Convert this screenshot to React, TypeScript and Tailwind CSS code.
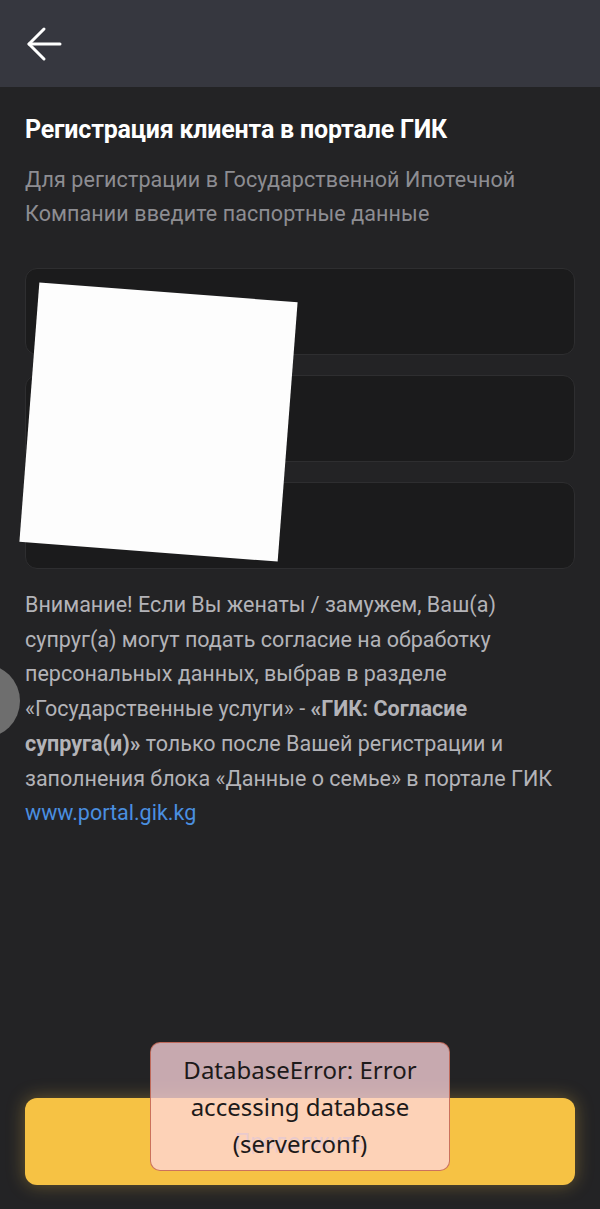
import React from "react";

export default function App() {
  const font = { fontFamily: "Roboto, 'Noto Sans', sans-serif" };
  return (
    <div className="relative w-[600px] h-[1209px] overflow-hidden bg-[#232325]" style={font}>
      <header className="h-[87px] bg-[#36373f] flex items-center pl-[25px]">
        <svg width="38" height="38" viewBox="0 0 38 38" fill="none" stroke="#ffffff" strokeWidth="3" strokeLinecap="round" strokeLinejoin="round">
          <path d="M35 19H4" />
          <path d="M19 4L4 19L19 34" />
        </svg>
      </header>

      <main className="px-[25px] pt-[27px]">
        <h1 className="text-[25px] leading-[32px] font-bold text-white tracking-[-0.2px]">Регистрация клиента в портале ГИК</h1>
        <p className="mt-[17px] text-[21.5px] leading-[34px] text-[#8d8d92] tracking-[0.1px]">
          Для регистрации в Государственной Ипотечной<br />Компании введите паспортные данные
        </p>

        <div className="mt-[37px] flex flex-col gap-[20px]">
          <div className="h-[87px] rounded-[12px] bg-[#1b1b1c] border border-[#2e2e30]" />
          <div className="h-[87px] rounded-[12px] bg-[#1b1b1c] border border-[#2e2e30]" />
          <div className="h-[87px] rounded-[12px] bg-[#1b1b1c] border border-[#2e2e30]" />
        </div>

        <p className="mt-[19px] text-[21.5px] leading-[34.7px] text-[#b3b3b8]">
          Внимание! Если Вы женаты / замужем, Ваш(а)<br />
          супруг(а) могут подать согласие на обработку<br />
          персональных данных, выбрав в разделе<br />
          «Государственные услуги» - <span className="font-bold">«ГИК: Согласие<br />супруга(и)»</span> только после Вашей регистрации и<br />
          заполнения блока «Данные о семье» в портале ГИК<br />
          <span className="text-[#4a8fe0]">www.portal.gik.kg</span>
        </p>
      </main>

      <div className="absolute left-[25px] right-[25px] top-[1098px] h-[87px] rounded-[12px] bg-[#f6c244] shadow-[0_0_18px_rgba(246,194,68,0.35)] flex items-center justify-center">
        <span className="text-[22px] text-[#a8a49a]">Продолжить</span>
      </div>

      <div className="absolute left-[150px] top-[1042px] w-[300px] h-[129px] rounded-[10px] bg-[rgba(255,215,222,0.75)] border border-[rgba(190,90,70,0.8)] flex items-center justify-center text-center" style={{ fontFamily: "'Noto Sans', Roboto, sans-serif" }}>
        <span className="text-[24px] leading-[37px] text-[#1d1a1a]">DatabaseError: Error<br />accessing database<br />(serverconf)</span>
      </div>

      <div className="absolute left-[-54px] top-[664px] w-[74px] h-[74px] rounded-full bg-[#6e6e6e]" />

      <div className="absolute left-[29px] top-[292px] w-[259px] h-[260px] bg-[#fdfdfd] rotate-[4.4deg]" />
    </div>
  );
}
